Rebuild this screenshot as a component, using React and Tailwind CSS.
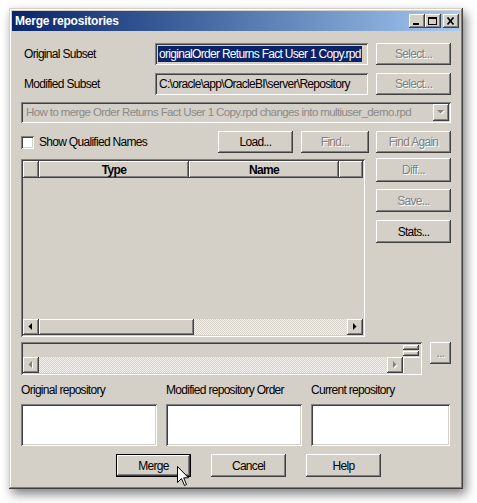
import React from 'react';

const raised = "shadow-[inset_-1px_-1px_0_#404040,inset_1px_1px_0_#ffffff,inset_-2px_-2px_0_#808080,inset_2px_2px_0_#d4d0c8]";
const sunken = "shadow-[inset_1px_1px_0_#808080,inset_-1px_-1px_0_#ffffff,inset_2px_2px_0_#404040,inset_-2px_-2px_0_#d4d0c8]";
const hatch = "bg-[repeating-conic-gradient(#d4d0c8_0_25%,#f4f3f0_0_50%)] bg-size-[2px_2px]";
const dis = "text-[#808080] [text-shadow:1px_1px_0_#ffffff]";

const Btn = ({ children, w = 'w-[75px]', h = 'h-[22px]', disabled, def }) => (
  <div
    className={`${w} ${h} shrink-0 flex items-center justify-center bg-[#d4d0c8] ${def ? 'border border-black' : ''} ${raised} ${disabled ? dis : 'text-black'}`}
  >
    {children}
  </div>
);

const Arrow = ({ dir, disabled }) => (
  <div className={`w-[16px] h-[16px] shrink-0 flex items-center justify-center bg-[#d4d0c8] ${raised}`}>
    <svg width="8" height="8" viewBox="0 0 8 8">
      {disabled && <path d={dir === 'left' ? 'M6 1 L6 8 L2.5 4.5 Z' : 'M3 1 L3 8 L6.5 4.5 Z'} fill="#ffffff" />}
      <path d={dir === 'left' ? 'M5 0 L5 7 L1.5 3.5 Z' : 'M2 0 L2 7 L5.5 3.5 Z'} fill={disabled ? '#808080' : '#000000'} />
    </svg>
  </div>
);

const TitleBtn = ({ children }) => (
  <div className={`w-[16px] h-[14px] flex items-center justify-center bg-[#d4d0c8] ${raised}`}>
    <svg width="10" height="9" viewBox="0 0 10 9">{children}</svg>
  </div>
);

export default function App() {
  return (
    <div className="relative w-[477px] h-[503px] bg-white overflow-hidden pt-[8px] pl-[9px] font-['Liberation_Sans',Arial,sans-serif] text-[12px] tracking-[-0.7px] text-black">
      <div className="w-[454px] h-[481px] bg-[#d4d0c8] p-[3px] flex flex-col shadow-[3px_5px_10px_rgba(0,0,0,0.5),inset_-1px_-1px_0_#404040,inset_1px_1px_0_#d4d0c8,inset_-2px_-2px_0_#808080,inset_2px_2px_0_#ffffff]">
        {/* Title bar */}
        <div className="h-[20px] shrink-0 flex items-center justify-between bg-linear-to-r from-[#0a246a] to-[#a6caf0] pl-[3px] pr-[1px]">
          <span className="text-white font-bold tracking-[-0.2px]">Merge repositories</span>
          <div className="flex items-center">
            <TitleBtn><rect x="1" y="6" width="6" height="2" fill="#000" /></TitleBtn>
            <TitleBtn>
              <rect x="0.5" y="0.5" width="8" height="7" fill="none" stroke="#000" />
              <rect x="0" y="0" width="9" height="2" fill="#000" />
            </TitleBtn>
            <div className="w-[2px]" />
            <TitleBtn><path d="M1.5 0.5 L7.5 7.5 M7.5 0.5 L1.5 7.5" stroke="#000" strokeWidth="1.7" /></TitleBtn>
          </div>
        </div>

        <div className="flex-1 flex flex-col px-[9px] pt-[12px]">
          {/* Original subset */}
          <div className="flex items-center h-[22px]">
            <div className="w-[134px] pl-[3px]">Original Subset</div>
            <div className={`w-[213px] h-[22px] ${sunken} bg-[#d4d0c8] p-[3px] overflow-hidden flex items-center`}>
              <span className="bg-[#0a246a] text-white whitespace-nowrap leading-[16px] px-[1px]">originalOrder Returns Fact User 1 Copy.rpd</span>
            </div>
            <div className="w-[8px]" />
            <Btn disabled>Select...</Btn>
          </div>

          {/* Modified subset */}
          <div className="flex items-center h-[22px] mt-[8px]">
            <div className="w-[134px] pl-[3px]">Modified Subset</div>
            <div className={`w-[213px] h-[22px] ${sunken} bg-[#d4d0c8] pl-[4px] pr-[4px] overflow-hidden flex items-center`}>
              <span className="whitespace-nowrap">C:\oracle\app\OracleBI\server\Repository</span>
            </div>
            <div className="w-[8px]" />
            <Btn disabled>Select...</Btn>
          </div>

          {/* Combo */}
          <div className={`mt-[7px] h-[21px] ${sunken} bg-[#d4d0c8] flex items-center pl-[5px] pr-[2px]`}>
            <span className="flex-1 whitespace-nowrap overflow-hidden text-[#8a8a8a] text-[11.5px] tracking-[-0.6px]">How to merge Order Returns Fact User 1 Copy.rpd changes into multiuser_demo.rpd</span>
            <div className={`w-[16px] h-[17px] flex items-center justify-center bg-[#d4d0c8] ${raised}`}>
              <svg width="8" height="5" viewBox="0 0 8 5">
                <path d="M1 1 L8 1 L4.5 4.5 Z" fill="#ffffff" />
                <path d="M0 0 L7 0 L3.5 3.5 Z" fill="#808080" />
              </svg>
            </div>
          </div>

          {/* Checkbox row */}
          <div className="mt-[8px] h-[22px] flex items-center">
            <div className={`w-[13px] h-[13px] bg-white ${sunken}`} />
            <span className="ml-[5px]">Show Qualified Names</span>
            <div className="flex-1" />
            <Btn>Load...</Btn>
            <div className="w-[8px]" />
            <Btn w="w-[68px]" disabled>Find...</Btn>
            <div className="w-[7px]" />
            <Btn disabled>Find Again</Btn>
          </div>

          {/* Grid + side buttons */}
          <div className="mt-[5px] h-[179px] flex justify-between">
            <div className={`mt-[1px] w-[344px] h-[178px] bg-[#d4d0c8] ${sunken} p-[2px] flex flex-col`}>
              <div className="h-[17px] flex font-bold">
                <div className={`w-[16px] ${raised}`} />
                <div className={`w-[150px] flex items-center justify-center ${raised}`}>Type</div>
                <div className={`w-[150px] flex items-center justify-center ${raised}`}>Name</div>
                <div className={`flex-1 ${raised}`} />
              </div>
              <div className="flex-1" />
              <div className="h-[16px] flex">
                <Arrow dir="left" />
                <div className={`w-[155px] bg-[#d4d0c8] ${raised}`} />
                <div className={`flex-1 ${hatch}`} />
                <Arrow dir="right" />
              </div>
            </div>
            <div className="flex flex-col">
              <Btn h="h-[24px]" disabled>Diff...</Btn>
              <div className="h-[7px]" />
              <Btn h="h-[23px]" disabled>Save...</Btn>
              <div className="h-[8px]" />
              <Btn h="h-[23px]">Stats...</Btn>
            </div>
          </div>

          {/* Second panel */}
          <div className="mt-[5px] h-[33px] flex items-start">
            <div className={`w-[401px] h-[33px] bg-[#d4d0c8] ${sunken} p-[2px] flex flex-col`}>
              <div className="h-[13px] flex justify-end">
                <div className="w-[16px] flex flex-col justify-center gap-[1px] mr-[1px]">
                  <div className={`h-[5px] ${raised}`} />
                  <div className={`h-[5px] ${raised}`} />
                </div>
              </div>
              <div className="h-[16px] flex">
                <Arrow dir="left" disabled />
                <div className={`flex-1 ${hatch}`} />
                <Arrow dir="right" disabled />
                <div className="w-[17px] border-l border-t border-white" />
              </div>
            </div>
            <div className="w-[8px]" />
            <Btn w="w-[21px]" disabled>...</Btn>
          </div>

          {/* Repository labels */}
          <div className="mt-[8px] h-[14px] leading-[14px] flex gap-[9px]">
            <div className="w-[136px]">Original repository</div>
            <div className="w-[136px]">Modified repository Order</div>
            <div className="w-[139px]">Current repository</div>
          </div>
          <div className="mt-[7px] h-[42px] flex gap-[9px]">
            <div className={`w-[136px] bg-white ${sunken}`} />
            <div className={`w-[136px] bg-white ${sunken}`} />
            <div className={`w-[139px] bg-white ${sunken}`} />
          </div>

          {/* Bottom buttons */}
          <div className="mt-[8px] h-[23px] flex pl-[95px] gap-[20px]">
            <Btn h="h-[23px]" def>Merge</Btn>
            <Btn h="h-[23px]">Cancel</Btn>
            <Btn h="h-[23px]">Help</Btn>
          </div>
        </div>
      </div>

      {/* Mouse cursor */}
      <svg className="absolute left-[177px] top-[466px]" width="13" height="21" viewBox="0 0 13 21">
        <path d="M0.5 0.5 L0.5 16.5 L4.5 12.5 L7.5 19.5 L9.5 18.5 L6.7 11.8 L11.5 11.8 Z" fill="#ffffff" stroke="#000000" strokeWidth="1" strokeLinejoin="miter" />
      </svg>
    </div>
  );
}
